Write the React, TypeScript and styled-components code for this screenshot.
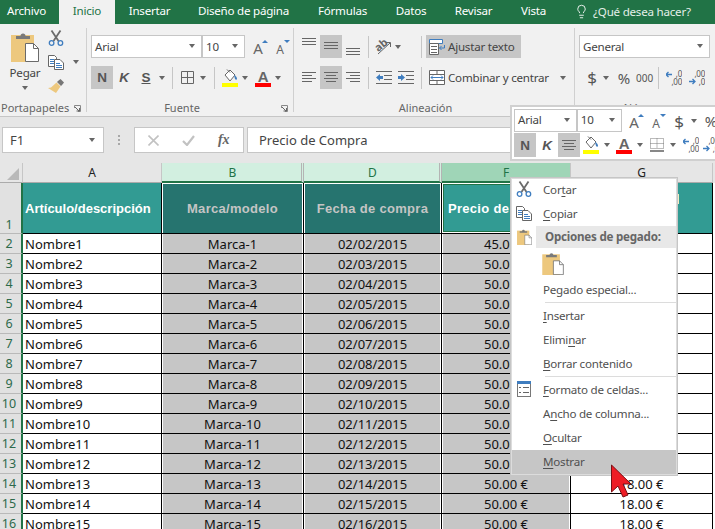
import React from "react";
import styled, { createGlobalStyle } from "styled-components";
import { Lightbulb } from "lucide-react";

const Global = createGlobalStyle`
  html, body { margin: 0; padding: 0; width: 715px; height: 529px; overflow: hidden; background: #fff; }
  * { box-sizing: border-box; }
  u { text-underline-offset: 2px; }
`;

const UI = `"Noto Sans", "Open Sans", sans-serif`;

const Page = styled.div`
  position: relative;
  width: 715px;
  height: 529px;
  overflow: hidden;
  font-family: ${UI};
  font-size: 11.6px;
  letter-spacing: -0.23px;
  color: #444;
`;

/* ---------- tabs ---------- */
const TabBar = styled.div`
  display: flex;
  height: 24px;
  background: #217346;
`;
const Tab = styled.div<{ $w: number; $active?: boolean; $first?: boolean }>`
  width: ${(p) => p.$w}px;
  height: 24px;
  line-height: 18px;
  display: flex;
  align-items: center;
  justify-content: ${(p) => (p.$first ? "flex-start" : "center")};
  padding: 0 0 2px ${(p) => (p.$first ? 7 : 0)}px;
  color: ${(p) => (p.$active ? "#217346" : "#fff")};
  background: ${(p) => (p.$active ? "#f1f1f1" : "transparent")};
`;
const Tell = styled.div`
  display: flex;
  align-items: center;
  gap: 4px;
  margin-left: 14px;
  padding-bottom: 2px;
  color: #e4efe8;
`;

/* ---------- ribbon ---------- */
const Ribbon = styled.div`
  display: flex;
  height: 93px;
  background: #f1f1f1;
  border-bottom: 1px solid #c6c6c6;
  padding: 4px 0 4px;
`;
const Group = styled.div<{ $w: number; $pad?: number; $last?: boolean }>`
  position: relative;
  width: ${(p) => p.$w}px;
  height: 84px;
  padding: 7px 0 0 ${(p) => p.$pad ?? 4}px;
  border-right: ${(p) => (p.$last ? "none" : "1px solid #d0d0d0")};
  display: flex;
  flex-direction: column;
`;
const GroupRow = styled.div`
  display: flex;
  align-items: center;
  height: 23px;
  margin-bottom: 8px;
`;
const GroupLabel = styled.div<{ $pr?: number; $start?: boolean }>`
  position: absolute;
  left: ${(p) => (p.$start ? 1 : 0)}px;
  right: 0;
  bottom: -4px;
  padding-right: ${(p) => p.$pr ?? 0}px;
  text-align: ${(p) => (p.$start ? "left" : "center")};
  font-size: 11px;
  line-height: 16px;
  letter-spacing: 0;
  color: #666;
`;
const Launcher = styled.svg`
  position: absolute;
  right: 5px;
  bottom: 0;
  width: 7px;
  height: 7px;
`;
const ClipLayout = styled.div`
  display: flex;
  padding-left: 1px;
`;
const PasteCol = styled.div`
  width: 45px;
  display: flex;
  flex-direction: column;
  align-items: center;
  padding-right: 1px;
  margin-top: -3px;
`;
const PasteLabel = styled.div`
  line-height: 16px;
  margin-top: 3px;
`;
const ClipTools = styled.div`
  display: flex;
  flex-direction: column;
  gap: 8px;
  margin-top: -5px;
`;
const ClipTool = styled.div`
  display: flex;
  align-items: center;
  gap: 9px;
  height: 16px;
`;
const Caret = styled.span<{ $mx?: number; $mt?: number }>`
  display: inline-block;
  width: 0;
  height: 0;
  border-left: 3.5px solid transparent;
  border-right: 3.5px solid transparent;
  border-top: 4px solid #666;
  margin: ${(p) => p.$mt ?? 0}px ${(p) => p.$mx ?? 0}px 0;
  flex: none;
`;
const Combo = styled.div<{ $w: number; $ml?: number }>`
  width: ${(p) => p.$w}px;
  margin-left: ${(p) => p.$ml ?? 0}px;
  height: 23px;
  background: #fff;
  border: 1px solid #c6c6c6;
  display: flex;
  align-items: center;
  justify-content: space-between;
  padding: 0 6px 1px 3px;
  color: #444;
`;
const ToolBtn = styled.div<{ $w?: number; $on?: boolean; $ml?: number }>`
  width: ${(p) => p.$w ?? 22}px;
  height: 23px;
  margin-left: ${(p) => p.$ml ?? 0}px;
  flex: none;
  display: flex;
  align-items: center;
  justify-content: center;
  background: ${(p) => (p.$on ? "#c6c6c6" : "transparent")};
  font-family: "Liberation Sans", sans-serif;
  font-weight: bold;
  font-size: 13.5px;
  letter-spacing: 0;
  color: #555;
`;
const Italic = styled.span`
  font-style: italic;
`;
const Under = styled.span`
  text-decoration: underline;
`;
const Sep = styled.div<{ $ml?: number; $mr?: number }>`
  width: 1px;
  height: 22px;
  flex: none;
  background: #c6c6c6;
  margin-left: ${(p) => p.$ml ?? 0}px;
  margin-right: ${(p) => p.$mr ?? 0}px;
`;
const Spacer = styled.span<{ $w: number }>`
  width: ${(p) => p.$w}px;
  flex: none;
`;
const Grow = styled.div<{ $w: number; $pl?: number }>`
  width: ${(p) => p.$w}px;
  flex: none;
  display: flex;
  align-items: center;
  padding-left: ${(p) => p.$pl ?? 0}px;
`;
const WideBtn = styled.div<{ $on?: boolean; $w: number; $ml?: number }>`
  width: ${(p) => p.$w}px;
  margin-left: ${(p) => p.$ml ?? 0}px;
  height: 23px;
  display: flex;
  align-items: center;
  padding-left: 3px;
  gap: 3px;
  white-space: nowrap;
  color: #444;
  background: ${(p) => (p.$on ? "#c6c6c6" : "transparent")};
`;
const NumGlyph = styled.span<{ $size?: number; $w?: number; $ml?: number }>`
  font-size: ${(p) => p.$size ?? 16}px;
  width: ${(p) => p.$w ?? 14}px;
  margin-left: ${(p) => p.$ml ?? 0}px;
  text-align: center;
  letter-spacing: 0;
  color: #555;
  flex: none;
`;

/* ---------- formula bar ---------- */
const FormulaBar = styled.div`
  display: flex;
  align-items: center;
  height: 46px;
  background: #e6e6e6;
  padding: 0 0 0 2px;
  letter-spacing: 0;
`;
const NameBox = styled.div`
  width: 102px;
  height: 26px;
  background: #fff;
  border: 1px solid #c6c6c6;
  display: flex;
  align-items: center;
  justify-content: space-between;
  padding: 0 8px 0 7px;
  font-size: 13px;
  color: #444;
`;
const Grip = styled.div`
  width: 2px;
  height: 10px;
  margin: 0 14px 0 14px;
  background: repeating-linear-gradient(#a8a8a8 0 2px, transparent 2px 4px);
`;
const FxBox = styled.div`
  width: 110px;
  height: 26px;
  background: #fff;
  border: 1px solid #c6c6c6;
  display: flex;
  align-items: center;
  justify-content: space-around;
  padding: 0 2px;
`;
const FxText = styled.span`
  font-family: "Liberation Serif", serif;
  font-style: italic;
  font-weight: bold;
  font-size: 14px;
  color: #666;
`;
const Input = styled.div`
  flex: 1;
  height: 26px;
  margin-left: 3px;
  background: #fff;
  border: 1px solid #c6c6c6;
  border-right: none;
  display: flex;
  align-items: center;
  padding-left: 11px;
  font-size: 13px;
  color: #444;
`;

/* ---------- sheet ---------- */
const Sheet = styled.div`
  display: grid;
  grid-template-columns: 23px 139px 142px 138px 129px 142px 2px;
  grid-template-rows: 20px 51px repeat(15, 20px);
  background: #fff;
  font-size: 13px;
  letter-spacing: 0;
  color: #111;
`;
const Corner = styled.div`
  background: #e6e6e6;
  border-right: 1px solid #c6c6c6;
  border-bottom: 1px solid #ababab;
  position: relative;
  overflow: hidden;
  &::after {
    content: "";
    position: absolute;
    right: 3px;
    bottom: 2px;
    border-left: 12px solid transparent;
    border-bottom: 12px solid #b9b9b9;
  }
`;
const ColHead = styled.div<{ $tone: "none" | "sel" | "active"; $gap?: boolean }>`
  background: ${(p) =>
    p.$tone === "active" ? "#9fd5b7" : p.$tone === "sel" ? "#d2efe0" : "#e6e6e6"};
  color: ${(p) => (p.$tone === "none" ? "#222" : "#217346")};
  border-bottom: ${(p) =>
    p.$tone === "none" ? "1px solid #ababab" : "2px solid #217346"};
  border-right: ${(p) => (p.$gap ? "3px double #b4b4b4" : "1px solid #c6c6c6")};
  padding-left: ${(p) => (p.$gap ? 2 : 0)}px;
  display: flex;
  align-items: center;
  justify-content: center;
  font-size: 12px;
`;
const Filler = styled.div<{ $head?: boolean }>`
  background: ${(p) => (p.$head ? "#e6e6e6" : "#fff")};
`;
const RowHead = styled.div<{ $tall?: boolean }>`
  background: #e1e1e1;
  border-right: 2px solid #217346;
  border-bottom: 1px solid #b9b9b9;
  color: #2d6a4b;
  font-size: 12.5px;
  display: flex;
  align-items: ${(p) => (p.$tall ? "flex-end" : "center")};
  justify-content: center;
  padding-right: 3px;
`;
const HeadCell = styled.div<{ $sel?: boolean; $active?: boolean; $left?: boolean }>`
  position: relative;
  background: ${(p) => (p.$sel ? "#26746f" : "#329b93")};
  color: ${(p) => (p.$sel ? "#c4c4c4" : "#fff")};
  font-family: "Liberation Sans", sans-serif;
  font-weight: bold;
  font-size: 13px;
  letter-spacing: ${(p) => (p.$left ? 0 : 0.3)}px;
  white-space: nowrap;
  overflow: hidden;
  display: flex;
  align-items: center;
  justify-content: ${(p) => (p.$left ? "flex-start" : "center")};
  padding-left: ${(p) => (p.$left ? 2 : 0)}px;
  border-bottom: 1px solid #000;
  border-right: 1px solid #000;
  box-shadow: ${(p) =>
    p.$active
      ? "inset 0 0 0 1px #fff, inset 0 0 0 2px #217346"
      : p.$sel
      ? "inset 1px 0 0 #fff, inset -1px 0 0 #fff, inset 0 1px 0 #fff"
      : "none"};
`;
const Cell = styled.div<{ $sel?: boolean; $left?: boolean }>`
  background: ${(p) => (p.$sel ? "#c6c6c6" : "#fff")};
  border-bottom: 1px solid #000;
  border-right: 1px solid #000;
  box-shadow: ${(p) => (p.$sel ? "inset 1px 0 0 #fff, inset -1px 0 0 #fff" : "none")};
  display: flex;
  align-items: center;
  justify-content: ${(p) => (p.$left ? "flex-start" : "center")};
  padding-left: ${(p) => (p.$left ? 2 : 0)}px;
  white-space: nowrap;
  line-height: 18px;
`;
const FilterMark = styled.span`
  position: absolute;
  left: 106px;
  top: 11px;
  width: 2px;
  height: 10px;
  background: #f4edc4;
`;

/* ---------- mini toolbar ---------- */
const MiniBar = styled.div`
  position: absolute;
  left: 510px;
  top: 105px;
  width: 210px;
  height: 56px;
  background: #fff;
  border: 2px solid #d0d0d0;
  padding: 2px 0 0 2px;
  display: flex;
  flex-direction: column;
  overflow: hidden;
`;
const MiniRow = styled.div`
  display: flex;
  align-items: center;
  height: 24px;
  white-space: nowrap;
  & > ${ToolBtn} {
    height: 24px;
  }
  & > ${Combo} {
    align-self: flex-start;
    padding-bottom: 2px;
  }
`;

/* ---------- context menu ---------- */
const Menu = styled.div`
  position: absolute;
  left: 510px;
  top: 177px;
  width: 168px;
  height: 299px;
  background: #fff;
  border: 1px solid #c6c6c6;
  box-shadow: 0 0 0 1px #dcdcdc inset;
  padding: 0 1px 1px;
  color: #505050;
`;
const MenuItem = styled.div<{ $hover?: boolean }>`
  height: 24px;
  display: flex;
  align-items: center;
  padding-bottom: 2px;
  background: ${(p) => (p.$hover ? "#c6c6c6" : "transparent")};
`;
const MenuIcon = styled.div`
  width: 31px;
  flex: none;
  display: flex;
  justify-content: center;
  padding-right: 7px;
`;
const MenuSection = styled.div`
  height: 22px;
  display: flex;
  align-items: center;
  position: relative;
`;
const SectionTitle = styled.div`
  flex: 1;
  height: 22px;
  margin-left: -7px;
  background: #e8e8e8;
  padding-left: 9px;
  line-height: 21px;
  font-weight: 700;
  color: #666;
`;
const PasteRow = styled.div`
  height: 30px;
  padding: 4px 0 0 30px;
`;
const MenuSep = styled.div`
  height: 1px;
  margin-left: 33px;
  background: #dcdcdc;
`;
const MenuGap = styled.div`
  height: 1px;
`;
const Cursor = styled.svg`
  position: absolute;
  left: 610px;
  top: 464px;
  width: 22px;
  height: 34px;
`;

/* ---------- icons ---------- */
const Ico = styled.svg<{ $w: number; $h: number }>`
  width: ${(p) => p.$w}px;
  height: ${(p) => p.$h}px;
  flex: none;
  display: block;
`;

const Clipboard = ({ w, h }: { w: number; h: number }) => (
  <Ico $w={w} $h={h} viewBox="0 0 28 30">
    <rect x="0" y="3" width="23" height="27" fill="#edc87e" />
    <path d="M5 7V4h4.500a2.500 2.500 0 0 1 5 0H19v3z" fill="#7a7a7a" />
    <path d="M14.500 11.500h8l5 5v13h-13z" fill="#fff" stroke="#6a6a6a" />
    <path d="M22.500 11.500v5h5" fill="none" stroke="#6a6a6a" />
  </Ico>
);
const Scissors = () => (
  <Ico $w={16} $h={16} viewBox="0 0 16 16">
    <path d="M3.500 0.500L10.500 11M12.500 0.500L5.500 11" stroke="#6b6b6b" strokeWidth="1.800" fill="none" />
    <circle cx="3.600" cy="13" r="2.300" stroke="#3f7dbf" strokeWidth="1.300" fill="none" />
    <circle cx="12.400" cy="13" r="2.300" stroke="#3f7dbf" strokeWidth="1.300" fill="none" />
  </Ico>
);
const CopyDocs = () => (
  <Ico $w={16} $h={15} viewBox="0 0 16 15">
    <path d="M.5.500h6l2 2v9h-8z" fill="#fff" stroke="#666" />
    <path d="M2 4.500h4M2 6.500h4M2 8.500h4" stroke="#3f7dbf" />
    <path d="M6.500 4.500h5.500l3.500 3.500v6.500h-9z" fill="#fff" stroke="#666" />
    <path d="M8 8.500h4M8 10.500h6M8 12.500h6" stroke="#3f7dbf" />
  </Ico>
);
const Brush = () => (
  <Ico $w={16} $h={15} viewBox="0 0 16 15">
    <path d="M10 2l2.500-2L16 3.500l-2 2.500 -1 1L9 3z" fill="#777" />
    <path d="M8.500 3.500L12.500 7.500 8 14 0 9l3-.5z" fill="#edc87e" />
  </Ico>
);
const Borders = () => (
  <Ico $w={13} $h={13} viewBox="0 0 13 13">
    <path d="M.5.500h12v12H.5zM6.500.500v12M.5 6.500h12" fill="none" stroke="#666" />
  </Ico>
);
const DottedBorders = () => (
  <Ico $w={14} $h={14} viewBox="0 0 14 14">
    <path d="M.5.500h13v10H.5zM7 .500v10M.5 5.500h13" fill="none" stroke="#777" strokeDasharray="1 1" />
    <path d="M0 13h14" stroke="#555" strokeWidth="1.400" />
  </Ico>
);
const FillColor = () => (
  <Ico $w={16} $h={18} viewBox="0 0 16 18">
    <path d="M3 6l5-5 5 5-5 6z" fill="#fff" stroke="#666" />
    <path d="M12 6c2 1 3 2 3 4 0 1-1.500 1-2 0z" fill="#3f7dbf" />
    <path d="M5 0.500l3 3" stroke="#666" />
    <rect x="0" y="14" width="16" height="4" fill="#ffff00" />
  </Ico>
);
const FontColor = () => (
  <Ico $w={16} $h={18} viewBox="0 0 16 18">
    <text x="8" y="13" textAnchor="middle" fontFamily="Liberation Sans" fontWeight="700" fontSize="15" fill="#666">A</text>
    <rect x="0" y="14" width="16" height="4" fill="#ff0000" />
  </Ico>
);
const GrowA = ({ up }: { up: boolean }) => (
  <Ico $w={16} $h={16} viewBox="0 0 16 16">
    <text x="6" y="15" textAnchor="middle" fontFamily="Noto Sans" fontWeight="400" fontSize={up ? 15 : 12} fill="#666">A</text>
    <path d={up ? "M10 4l3-3 3 3z" : "M10 1h6l-3 3z"} fill="#3f7dbf" />
  </Ico>
);
const Lines = ({ rows, w = 14, h = 15 }: { rows: [number, number, number][]; w?: number; h?: number }) => (
  <Ico $w={w} $h={h} viewBox={`0 0 ${w} ${h}`}>
    {rows.map(([a, b, y], i) => (
      <path key={i} d={`M${a} ${y + 0.5}H${b}`} stroke="#666" />
    ))}
  </Ico>
);
const Orientation = () => (
  <Ico $w={17} $h={17} viewBox="0 0 17 17">
    <text x="0" y="11" transform="rotate(-40 6 8)" fontFamily="Noto Sans" fontWeight="700" fontSize="11" fill="#666">ab</text>
    <path d="M3 16L15 5M11 4.500h4.500V9" stroke="#666" fill="none" />
  </Ico>
);
const Indent = ({ rev }: { rev?: boolean }) => (
  <Ico $w={16} $h={13} viewBox="0 0 16 13">
    <path d="M0 .500h16M8 4.500h8M8 8.500h8M0 12.500h16" stroke="#666" />
    <path d={rev ? "M0 6.500L4 3v2h3v3H4v2z" : "M7 6.500L3 3v2H0v3h3v2z"} fill="#3f7dbf" />
  </Ico>
);
const Wrap = () => (
  <Ico $w={16} $h={16} viewBox="0 0 16 16">
    <path d="M.5.500h13v4H.5z" fill="#fff" stroke="#3f7dbf" />
    <path d="M.5 4.500h9v11H.500z" fill="#fff" stroke="#666" />
    <path d="M2 7.500h6M2 10.500h6M2 13.500h6" stroke="#666" />
    <path d="M15.500 6v3h-5M12.500 7l-2 2 2 2" stroke="#3f7dbf" fill="none" />
  </Ico>
);
const Merge = () => (
  <Ico $w={16} $h={15} viewBox="0 0 16 15">
    <path d="M.5.500h15v14H.5zM.5 4.500h15M.5 10.500h15M8 .500v4M8 10.500v4" fill="#fff" stroke="#666" />
    <path d="M2 7.500h12M4 5.500l-2 2 2 2M12 5.500l2 2-2 2" stroke="#3f7dbf" fill="none" />
  </Ico>
);
const Decimal = ({ more }: { more?: boolean }) => (
  <Ico $w={16} $h={16} viewBox="0 0 16 16">
    <path
      d={more ? "M0 4.500h6M2.500 2L0 4.500 2.500 7" : "M0 11.500h6M3.500 9L6 11.500 3.500 14"}
      stroke="#3f7dbf"
      strokeWidth="1.300"
      fill="none"
    />
    <text x="16" y="7" textAnchor="end" fontFamily="Noto Sans" fontSize="8" fill="#555">{more ? ",0" : ",00"}</text>
    <text x="16" y="15" textAnchor="end" fontFamily="Noto Sans" fontSize="8" fill="#555">{more ? ",00" : ",0"}</text>
  </Ico>
);
const Cross = () => (
  <Ico $w={11} $h={11} viewBox="0 0 11 11">
    <path d="M.5.500l10 10M10.500.500l-10 10" stroke="#c2c2c2" strokeWidth="1.600" />
  </Ico>
);
const Check = () => (
  <Ico $w={13} $h={11} viewBox="0 0 13 11">
    <path d="M1 6l4 4 7-9" stroke="#c2c2c2" strokeWidth="2.200" fill="none" />
  </Ico>
);
const CellFormat = () => (
  <Ico $w={14} $h={16} viewBox="0 0 14 16">
    <rect x=".5" y=".5" width="13" height="15" fill="#fff" stroke="#777" />
    <rect x="0" y="0" width="14" height="3" fill="#3f7dbf" />
    <path d="M2 6.500h2M6 6.500h6M2 11.500h2M6 11.500h6" stroke="#666" />
  </Ico>
);
const LauncherIcon = () => (
  <Launcher viewBox="0 0 7 7">
    <path d="M.5 3V.5h6v6H4" fill="none" stroke="#888" />
    <path d="M1 2l4 4M2.500 6H5.500V3" fill="none" stroke="#666" />
  </Launcher>
);

/* ---------- data ---------- */
const TOP: [number, number, number][] = [[0, 14, 2], [0, 14, 5], [0, 14, 8]];
const MID: [number, number, number][] = [[0, 14, 6], [0, 14, 9], [0, 14, 12]];
const BOT: [number, number, number][] = [[0, 14, 12], [0, 14, 15], [0, 14, 18]];
const LEFT: [number, number, number][] = [[0, 14, 2], [0, 10, 5], [0, 14, 8], [0, 10, 11]];
const CENTER: [number, number, number][] = [[0, 14, 2], [2, 12, 5], [0, 14, 8], [2, 12, 11]];
const RIGHT: [number, number, number][] = [[0, 14, 2], [4, 14, 5], [0, 14, 8], [4, 14, 11]];

const rows = Array.from({ length: 15 }, (_, i) => i + 1);
const pad = (n: number) => String(n).padStart(2, "0");

export default function App() {
  return (
    <Page>
      <Global />
      <TabBar>
        <Tab $w={59} $first>Archivo</Tab>
        <Tab $w={56} $active>Inicio</Tab>
        <Tab $w={69}>Insertar</Tab>
        <Tab $w={119}>Diseño de página</Tab>
        <Tab $w={79}>Fórmulas</Tab>
        <Tab $w={58}>Datos</Tab>
        <Tab $w={67}>Revisar</Tab>
        <Tab $w={53}>Vista</Tab>
        <Tell>
          <Lightbulb size={15} strokeWidth={1.4} color="#fff" />
          ¿Qué desea hacer?
        </Tell>
      </TabBar>

      <Ribbon>
        <Group $w={87} $pad={2}>
          <ClipLayout>
            <PasteCol>
              <Clipboard w={28} h={30} />
              <PasteLabel>Pegar</PasteLabel>
              <Caret $mt={5} />
            </PasteCol>
            <ClipTools>
              <ClipTool><Scissors /></ClipTool>
              <ClipTool><CopyDocs /><Caret /></ClipTool>
              <ClipTool><Brush /></ClipTool>
            </ClipTools>
          </ClipLayout>
          <GroupLabel $start>Portapapeles</GroupLabel>
          <LauncherIcon />
        </Group>

        <Group $w={207}>
          <GroupRow>
            <Combo $w={111}>Arial<Caret /></Combo>
            <Combo $w={43}>10<Caret /></Combo>
            <ToolBtn $ml={4}><GrowA up /></ToolBtn>
            <ToolBtn><GrowA up={false} /></ToolBtn>
          </GroupRow>
          <GroupRow>
            <ToolBtn $on>N</ToolBtn>
            <ToolBtn><Italic>K</Italic></ToolBtn>
            <ToolBtn><Under>S</Under></ToolBtn>
            <Caret $mx={2} />
            <Sep $ml={5} $mr={8} />
            <Borders />
            <Caret $mx={6} />
            <Sep $ml={2} $mr={7} />
            <FillColor />
            <Caret $mx={4} />
            <Spacer $w={3} />
            <FontColor />
            <Caret $mx={4} />
          </GroupRow>
          <GroupLabel $pr={16}>Fuente</GroupLabel>
          <LauncherIcon />
        </Group>

        <Group $w={281}>
          <GroupRow>
            <Grow $w={70}>
              <ToolBtn><Lines rows={TOP} h={21} /></ToolBtn>
              <ToolBtn $on><Lines rows={MID} h={21} /></ToolBtn>
              <ToolBtn><Lines rows={BOT} h={21} /></ToolBtn>
            </Grow>
            <Sep />
            <Grow $w={52} $pl={6}><Orientation /><Caret $mx={3} /></Grow>
            <Sep />
            <WideBtn $on $w={95} $ml={4}><Wrap />Ajustar texto</WideBtn>
          </GroupRow>
          <GroupRow>
            <Grow $w={70}>
              <ToolBtn><Lines rows={LEFT} /></ToolBtn>
              <ToolBtn $on><Lines rows={CENTER} /></ToolBtn>
              <ToolBtn><Lines rows={RIGHT} /></ToolBtn>
            </Grow>
            <Sep />
            <Grow $w={52} $pl={7}><Indent rev /><Spacer $w={6} /><Indent /></Grow>
            <Sep />
            <WideBtn $w={144} $ml={4}><Merge />Combinar y centrar<Caret $mx={8} /></WideBtn>
          </GroupRow>
          <GroupLabel $pr={17}>Alineación</GroupLabel>
        </Group>

        <Group $w={140} $last>
          <GroupRow>
            <Combo $w={131}>General<Caret /></Combo>
          </GroupRow>
          <GroupRow>
            <Spacer $w={6} />
            <NumGlyph $size={17}>$</NumGlyph>
            <Caret $mx={4} />
            <NumGlyph $size={15} $ml={4}>%</NumGlyph>
            <NumGlyph $size={10} $w={16} $ml={5}>000</NumGlyph>
            <Sep $ml={6} $mr={7} />
            <Decimal more />
            <Spacer $w={7} />
            <Decimal />
          </GroupRow>
          <GroupLabel>Número</GroupLabel>
        </Group>
      </Ribbon>

      <FormulaBar>
        <NameBox>F1<Caret /></NameBox>
        <Grip />
        <FxBox><Cross /><Check /><FxText>fx</FxText></FxBox>
        <Input>Precio de Compra</Input>
      </FormulaBar>

      <Sheet>
        <Corner />
        <ColHead $tone="none">A</ColHead>
        <ColHead $tone="sel" $gap>B</ColHead>
        <ColHead $tone="sel" $gap>D</ColHead>
        <ColHead $tone="active">F</ColHead>
        <ColHead $tone="none">G</ColHead>
        <Filler $head />

        <RowHead $tall>1</RowHead>
        <HeadCell $left>Artículo/descripción</HeadCell>
        <HeadCell $sel>Marca/modelo</HeadCell>
        <HeadCell $sel>Fecha de compra</HeadCell>
        <HeadCell $active>Precio de Compra</HeadCell>
        <HeadCell><FilterMark /></HeadCell>
        <Filler />

        {rows.map((n) => (
          <React.Fragment key={n}>
            <RowHead>{n + 1}</RowHead>
            <Cell $left>Nombre{n}</Cell>
            <Cell $sel>Marca-{n}</Cell>
            <Cell $sel>02/{pad(n + 1)}/2015</Cell>
            <Cell $sel>{n === 1 ? "45.00 €" : "50.00 €"}</Cell>
            <Cell>18.00 €</Cell>
            <Filler />
          </React.Fragment>
        ))}
      </Sheet>

      <MiniBar>
        <MiniRow>
          <Combo $w={64}>Arial<Caret /></Combo>
          <Combo $w={46}>10<Caret /></Combo>
          <ToolBtn $ml={3}><GrowA up /></ToolBtn>
          <ToolBtn><GrowA up={false} /></ToolBtn>
          <Spacer $w={3} />
          <NumGlyph $size={17}>$</NumGlyph>
          <Caret $mx={5} />
          <NumGlyph $size={15} $ml={2}>%</NumGlyph>
        </MiniRow>
        <MiniRow>
          <ToolBtn $on>N</ToolBtn>
          <ToolBtn><Italic>K</Italic></ToolBtn>
          <ToolBtn $on><Lines rows={CENTER} /></ToolBtn>
          <Spacer $w={3} />
          <FillColor />
          <Caret $mx={5} />
          <Spacer $w={1} />
          <FontColor />
          <Caret $mx={5} />
          <Spacer $w={2} />
          <DottedBorders />
          <Caret $mx={6} />
          <Spacer $w={1} />
          <Decimal more />
          <Spacer $w={4} />
          <Decimal />
        </MiniRow>
      </MiniBar>

      <Menu>
        <MenuItem><MenuIcon><Scissors /></MenuIcon>Cor<u>t</u>ar</MenuItem>
        <MenuItem><MenuIcon><CopyDocs /></MenuIcon><u>C</u>opiar</MenuItem>
        <MenuSection>
          <MenuIcon><Clipboard w={15} h={16} /></MenuIcon>
          <SectionTitle>Opciones de pegado:</SectionTitle>
        </MenuSection>
        <PasteRow><Clipboard w={22} h={23} /></PasteRow>
        <MenuItem><MenuIcon />Pe<u>g</u>ado especial...</MenuItem>
        <MenuSep />
        <MenuGap />
        <MenuItem><MenuIcon /><u>I</u>nsertar</MenuItem>
        <MenuItem><MenuIcon />Elimi<u>n</u>ar</MenuItem>
        <MenuItem><MenuIcon /><u>B</u>orrar contenido</MenuItem>
        <MenuSep />
        <MenuGap />
        <MenuItem><MenuIcon><CellFormat /></MenuIcon><u>F</u>ormato de celdas...</MenuItem>
        <MenuItem><MenuIcon />A<u>n</u>cho de columna...</MenuItem>
        <MenuItem><MenuIcon /><u>O</u>cultar</MenuItem>
        <MenuItem $hover><MenuIcon /><u>M</u>ostrar</MenuItem>
      </Menu>

      <Cursor viewBox="0 0 22 34">
        <path d="M1.500 1v27l6.500-6 5 11 5-2-5-11h8z" fill="#ee1c25" stroke="#7a1015" strokeWidth="1" />
      </Cursor>
    </Page>
  );
}
